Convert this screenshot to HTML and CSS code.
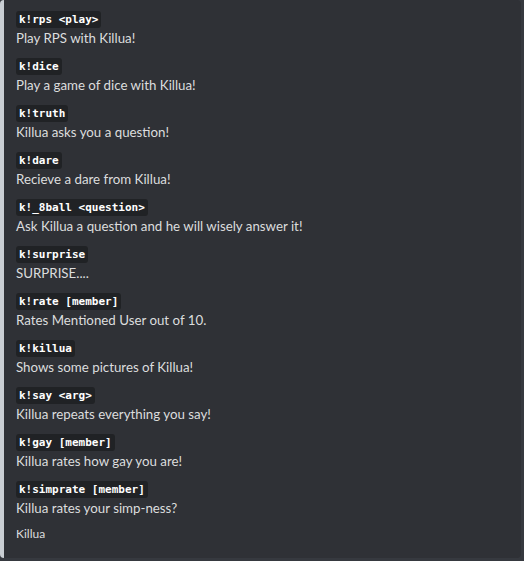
FILE: index.html
```html
<!DOCTYPE html>
<html>
<head>
<meta charset="utf-8">
<link rel="stylesheet" href="styles.css">
</head>
<body>
<div class="embed">
  <div class="fields">
    <div class="field"><div class="name"><code>k!rps &lt;play&gt;</code></div><div class="value">Play RPS with Killua!</div></div>
    <div class="field"><div class="name"><code>k!dice</code></div><div class="value">Play a game of dice with Killua!</div></div>
    <div class="field"><div class="name"><code>k!truth</code></div><div class="value">Killua asks you a question!</div></div>
    <div class="field"><div class="name"><code>k!dare</code></div><div class="value">Recieve a dare from Killua!</div></div>
    <div class="field"><div class="name"><code>k!_8ball &lt;question&gt;</code></div><div class="value">Ask Killua a question and he will wisely answer it!</div></div>
    <div class="field"><div class="name"><code>k!surprise</code></div><div class="value">SURPRISE....</div></div>
    <div class="field"><div class="name"><code>k!rate [member]</code></div><div class="value">Rates Mentioned User out of 10.</div></div>
    <div class="field"><div class="name"><code>k!killua</code></div><div class="value">Shows some pictures of Killua!</div></div>
    <div class="field"><div class="name"><code>k!say &lt;arg&gt;</code></div><div class="value">Killua repeats everything you say!</div></div>
    <div class="field"><div class="name"><code>k!gay [member]</code></div><div class="value">Killua rates how gay you are!</div></div>
    <div class="field"><div class="name"><code>k!simprate [member]</code></div><div class="value">Killua rates your simp-ness?</div></div>
  </div>
  <div class="footer">Killua</div>
</div>
</body>
</html>
```
FILE: styles.css
```css
html, body {
  margin: 0;
  padding: 0;
  background: #36393f;
}
body {
  width: 524px;
  height: 561px;
  overflow: hidden;
  font-family: "Lato", "Open Sans", sans-serif;
}
.embed {
  box-sizing: border-box;
  width: 521px;
  height: 558px;
  background: #2f3136;
  border-left: 4px solid #c9ced3;
  border-radius: 4px;
  padding: 8px 12px 0 12px;
}
.fields {
  display: flex;
  flex-direction: column;
  gap: 8px;
}
.field {
  display: flex;
  flex-direction: column;
  gap: 4px;
}
.name {
  height: 17px;
  line-height: 17px;
}
.name code {
  display: inline-block;
  font-family: "DejaVu Sans Mono", monospace;
  font-weight: bold;
  font-size: 11px;
  line-height: 17px;
  color: #ffffff;
  background: #202225;
  border-radius: 3px;
  padding: 0 3px;
}
.value {
  font-size: 13.3px;
  line-height: 18px;
  color: #dcddde;
}
.footer {
  margin-top: 9px;
  font-size: 12px;
  line-height: 16px;
  color: #dcddde;
}
```
